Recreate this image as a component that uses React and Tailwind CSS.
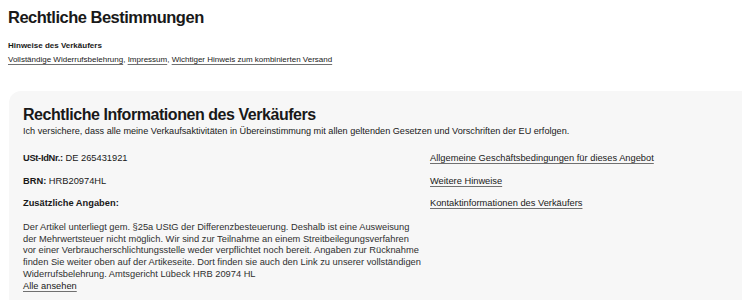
export default function App() {
  const link = "underline decoration-[#707070] underline-offset-[2px]";
  return (
    <div className="w-[742px] h-[300px] overflow-hidden bg-white text-[#191919] font-['Liberation_Sans',Arial,sans-serif]">
      <div className="pl-[8px] pt-[7px]">
        <h2 className="text-[16.5px] font-bold leading-[20px] tracking-[-0.5px]">Rechtliche Bestimmungen</h2>
        <div className="mt-[14px] text-[8px] font-bold leading-[10px]">Hinweise des Verkäufers</div>
        <div className="mt-[4px] text-[8px] leading-[10px]">
          <a className={link}>Vollständige Widerrufsbelehrung</a>, <a className={link}>Impressum</a>, <a className={link}>Wichtiger Hinweis zum kombinierten Versand</a>
        </div>
      </div>
      <div className="ml-[9px] mt-[26px] w-[760px] rounded-[12px] bg-[#f7f7f7] pl-[14px] pt-[14px] pb-[20px]">
        <h3 className="text-[16px] font-bold leading-[20px] tracking-[-0.45px]">Rechtliche Informationen des Verkäufers</h3>
        <p className="mt-[0px] text-[9.15px] leading-[12px]">Ich versichere, dass alle meine Verkaufsaktivitäten in Übereinstimmung mit allen geltenden Gesetzen und Vorschriften der EU erfolgen.</p>
        <div className="mt-[15px] flex text-[9.3px] leading-[12px]">
          <div className="w-[407px] shrink-0 flex flex-col">
            <div><span className="font-bold tracking-[-0.3px]">USt-IdNr.:</span> DE 265431921</div>
            <div className="mt-[10.5px]"><span className="font-bold">BRN:</span> HRB20974HL</div>
            <div className="mt-[10.5px] font-bold">Zusätzliche Angaben:</div>
            <div className="mt-[13px] whitespace-nowrap text-[9.3px] leading-[11.7px] text-[#2f2f2f]">
              Der Artikel unterliegt gem. §25a UStG der Differenzbesteuerung. Deshalb ist eine Ausweisung<br />
              der Mehrwertsteuer nicht möglich. Wir sind zur Teilnahme an einem Streitbeilegungsverfahren<br />
              vor einer Verbraucherschlichtungsstelle weder verpflichtet noch bereit. Angaben zur Rücknahme<br />
              finden Sie weiter oben auf der Artikeseite. Dort finden sie auch den Link zu unserer vollständigen<br />
              Widerrufsbelehrung. Amtsgericht Lübeck HRB 20974 HL
            </div>
            <div className="text-[9.3px] leading-[11.7px]"><a className={link}>Alle ansehen</a></div>
          </div>
          <div className="flex flex-col items-start">
            <a className={link}>Allgemeine Geschäftsbedingungen für dieses Angebot</a>
            <a className={"mt-[10.5px] " + link}>Weitere Hinweise</a>
            <a className={"mt-[10.5px] " + link}>Kontaktinformationen des Verkäufers</a>
          </div>
        </div>
      </div>
    </div>
  );
}
